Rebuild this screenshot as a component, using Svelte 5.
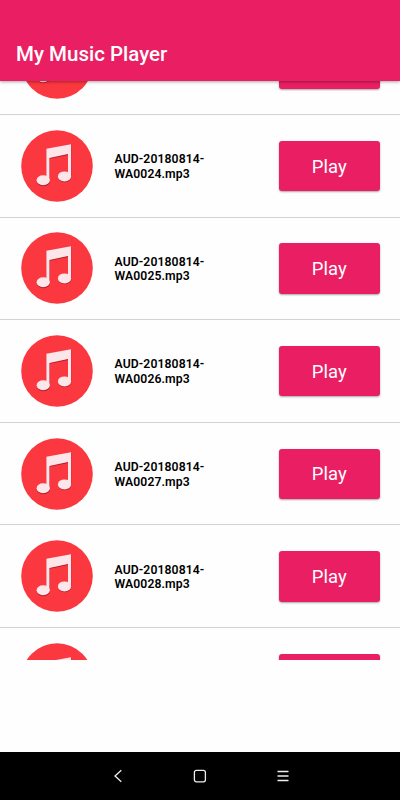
<script lang="ts">
	const tracks = [23, 24, 25, 26, 27, 28, 29].map((n) => ({
		prefix: 'AUD-20180814-',
		file: `WA00${n}.mp3`
	}));
</script>

<div class="screen">
	<header>
		<h1>My Music Player</h1>
	</header>

	<main>
		<ul>
			{#each tracks as track}
				<li>
					<svg class="cover" viewBox="0 0 72 72">
						<circle cx="36" cy="36" r="35.8" fill="#fb383f" />
						<g fill="#b01c2a" transform="translate(0.2 0.9)">
							<path d="M25.4 18.8 L50 14.2 V45 H47 V24 L28.4 27.9 V49 H25.4 Z" />
							<ellipse cx="22.2" cy="50.3" rx="6.6" ry="5" />
							<ellipse cx="43.5" cy="46.4" rx="6.6" ry="5" />
						</g>
						<g fill="#fde6e9">
							<path d="M25.4 18.8 L50 14.2 V47 H47 V24 L28.4 27.9 V51 H25.4 Z" />
							<ellipse cx="22.2" cy="50.3" rx="6.6" ry="5" />
							<ellipse cx="43.5" cy="46.4" rx="6.6" ry="5" />
						</g>
					</svg>
					<p>{track.prefix}<br />{track.file}</p>
					<button>Play</button>
				</li>
			{/each}
		</ul>
	</main>

	<nav>
		<svg viewBox="0 0 14 14"><path d="M9.3 1.3 L3 7 L9.3 12.7" /></svg>
		<svg viewBox="0 0 14 14"><rect x="1.4" y="1.4" width="11" height="11.4" rx="2" /></svg>
		<svg viewBox="0 0 14 14"><path d="M1.5 2.5 H12.5 M1.5 7 H12.5 M1.5 11.5 H12.5" /></svg>
	</nav>
</div>

<style>
	:global(body) {
		margin: 0;
		background: #fefefe;
	}

	.screen {
		display: flex;
		flex-direction: column;
		height: 800px;
		font-family: Roboto, sans-serif;
		background: #fefefe;
		overflow: hidden;
	}

	header {
		z-index: 1;
		display: flex;
		align-items: flex-end;
		box-sizing: border-box;
		height: 81px;
		padding: 0 16px 15px;
		background: #e91e63;
		box-shadow: 0 1px 3px rgba(0, 0, 0, 0.35);
	}

	h1 {
		margin: 0;
		color: #fff;
		font-size: 20.5px;
		font-weight: 500;
		line-height: 24px;
	}

	main {
		height: 579px;
		overflow: hidden;
	}

	ul {
		margin: -68.6px 0 0;
		padding: 0;
		list-style: none;
	}

	li {
		display: flex;
		align-items: center;
		box-sizing: border-box;
		height: 102.6px;
		padding: 0 20px 0 21px;
		border-bottom: 1px solid #d2d2d2;
	}

	.cover {
		width: 72px;
		height: 72px;
	}

	p {
		flex: 1;
		margin: 2px 0 0 21.5px;
		color: #000;
		font-size: 12.2px;
		font-weight: 600;
		line-height: 14.5px;
		letter-spacing: 0.1px;
	}

	button {
		width: 101.5px;
		height: 50.5px;
		margin-top: 0.5px;
		padding: 1px 0 0;
		border: 0;
		border-radius: 3px;
		background: #e91e63;
		box-shadow: 0 1px 2px rgba(0, 0, 0, 0.35);
		color: #fff;
		font: 400 18.5px Roboto, sans-serif;
	}

	nav {
		display: flex;
		justify-content: space-between;
		align-items: center;
		box-sizing: border-box;
		height: 48px;
		margin-top: auto;
		padding: 0 110px 0 112px;
		background: #000;
	}

	nav svg {
		width: 14px;
		height: 14px;
		fill: none;
		stroke: #eee;
		stroke-width: 1.3;
	}

	nav svg:nth-child(2) {
		margin-right: 2px;
	}
</style>
